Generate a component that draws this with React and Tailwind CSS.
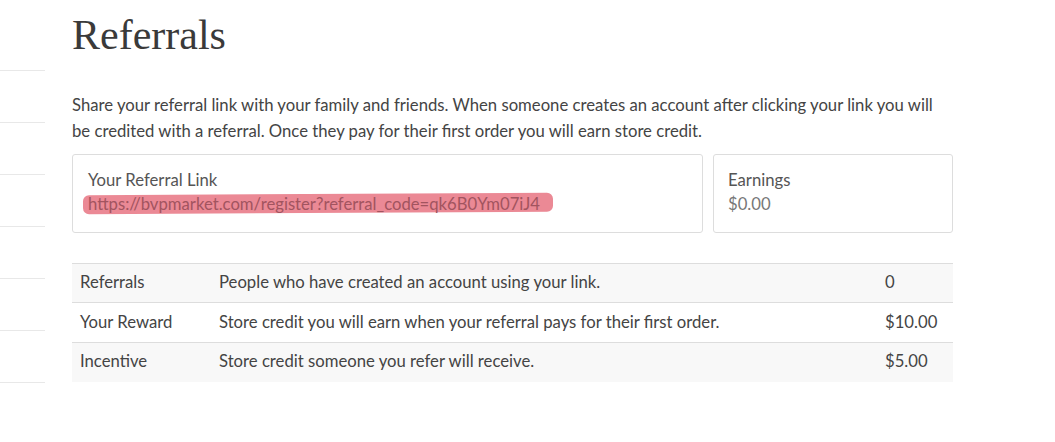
const rows = [
	{ label: "Referrals", desc: "People who have created an account using your link.", value: "0" },
	{ label: "Your Reward", desc: "Store credit you will earn when your referral pays for their first order.", value: "$10.00" },
	{ label: "Incentive", desc: "Store credit someone you refer will receive.", value: "$5.00" },
];

const App = () => {
	return (
		<div className="flex h-[442px] w-[1055px] overflow-hidden bg-white font-['Lato',sans-serif] text-[#555]">
			{/* sidebar leftovers */}
			<div className="flex w-[45px] shrink-0 flex-col pt-[70px]">
				{[0, 1, 2, 3, 4, 5, 6].map((i) => (
					<div key={i} className="h-[52px] border-t border-[#e8e8e8]" />
				))}
			</div>

			<div className="ml-[27px] w-[881px] shrink-0">
				<h1 className="mt-[12px] font-['Liberation_Serif',serif] text-[42px] leading-[46px] text-[#3a3a3a]">
					Referrals
				</h1>

				<p className="mt-[34px] text-[16.7px] leading-[26px] text-[#444]">
					Share your referral link with your family and friends. When someone creates an account after clicking your link you will be credited with a referral. Once they pay for their first order you will earn store credit.
				</p>

				<div className="mt-[10px] flex gap-[10px]">
					<div className="h-[79px] w-[631px] rounded-[3px] border border-[#ddd] px-[15px] pt-[13px]">
						<div className="text-[16.7px] leading-[24px] text-[#555]">Your Referral Link</div>
						<div className="relative leading-[24px]">
							<span className="absolute -left-[5px] top-[2px] h-[19px] w-[470px] -rotate-[0.3deg] rounded-[6px] bg-[#eb8995]" />
							<span className="relative text-[16.7px] text-[#a2545f]">
								https://bvpmarket.com/register?referral_code=qk6B0Ym07iJ4
							</span>
						</div>
					</div>
					<div className="h-[79px] flex-1 rounded-[3px] border border-[#ddd] px-[14px] pt-[13px]">
						<div className="text-[16.7px] leading-[24px] text-[#555]">Earnings</div>
						<div className="text-[16.7px] leading-[24px] text-[#777]">$0.00</div>
					</div>
				</div>

				<table className="mt-[30px] w-full border-collapse text-[16.7px] text-[#444]">
					<tbody>
						{rows.map((r, i) => (
							<tr key={r.label} className={i % 2 === 0 ? "bg-[#f8f8f8]" : "bg-white"}>
								<td className="h-[39.4px] w-[147px] border-t border-[#ddd] px-[8px] pb-[1px]">{r.label}</td>
								<td className="border-t border-[#ddd] px-0 pb-[1px]">{r.desc}</td>
								<td className="w-[68px] border-t border-[#ddd] pl-0 pb-[1px]">{r.value}</td>
							</tr>
						))}
					</tbody>
				</table>
			</div>
		</div>
	);
};

export default App;
